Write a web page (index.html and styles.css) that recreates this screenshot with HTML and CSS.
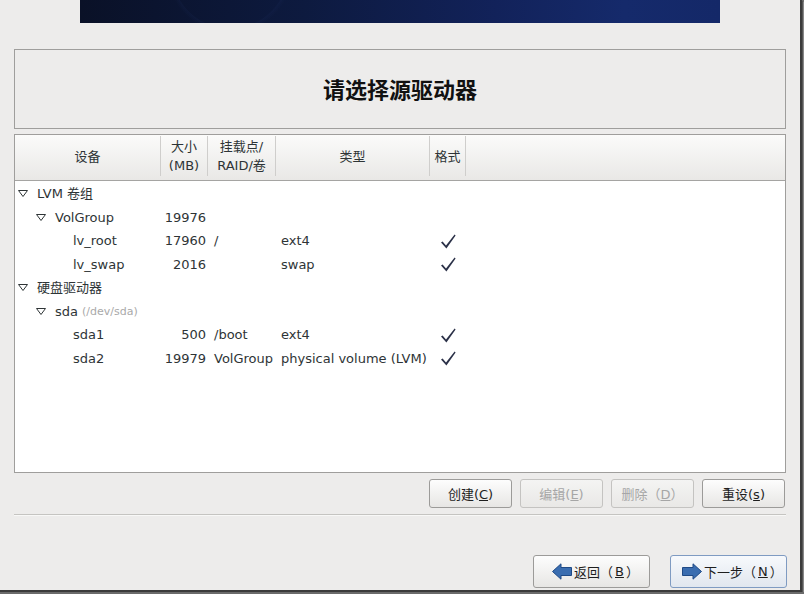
FILE: index.html
```html
<!doctype html>
<html lang="zh-CN">
<head>
  <meta charset="utf-8" />
  <title>请选择源驱动器</title>
  <link rel="stylesheet" href="styles.css">
</head>
<body>
  <div class="window">
    <div class="banner"></div>

    <div class="content">
      <div class="title-box">
        <h1>请选择源驱动器</h1>
      </div>

      <div class="tree">
        <div class="tree-head">
          <div class="th">设备</div>
          <div class="th">大小<br>(MB)</div>
          <div class="th">挂载点/<br>RAID/卷</div>
          <div class="th">类型</div>
          <div class="th">格式</div>
          <div class="th th-fill"></div>
        </div>

        <div class="row">
          <div class="name lvl0"><svg class="expander" viewBox="0 0 10 7"><polygon points="0.5,0.5 9.5,0.5 5,6.5" /></svg>LVM 卷组</div>
          <div class="size"></div><div class="mount"></div><div class="type"></div><div class="fmt"></div><div></div>
        </div>
        <div class="row">
          <div class="name lvl1"><svg class="expander" viewBox="0 0 10 7"><polygon points="0.5,0.5 9.5,0.5 5,6.5" /></svg>VolGroup</div>
          <div class="size">19976</div><div class="mount"></div><div class="type"></div><div class="fmt"></div><div></div>
        </div>
        <div class="row">
          <div class="name leaf">lv_root</div>
          <div class="size">17960</div><div class="mount">/</div><div class="type">ext4</div>
          <div class="fmt"><svg class="check" viewBox="0 0 16 16"><path d="M1 9.5 L2.6 8.6 L6 12.6 L14.6 1.6 L15.6 2.4 L6.4 15.4 Z" /></svg></div><div></div>
        </div>
        <div class="row">
          <div class="name leaf">lv_swap</div>
          <div class="size">2016</div><div class="mount"></div><div class="type">swap</div>
          <div class="fmt"><svg class="check" viewBox="0 0 16 16"><path d="M1 9.5 L2.6 8.6 L6 12.6 L14.6 1.6 L15.6 2.4 L6.4 15.4 Z" /></svg></div><div></div>
        </div>
        <div class="row">
          <div class="name lvl0"><svg class="expander" viewBox="0 0 10 7"><polygon points="0.5,0.5 9.5,0.5 5,6.5" /></svg>硬盘驱动器</div>
          <div class="size"></div><div class="mount"></div><div class="type"></div><div class="fmt"></div><div></div>
        </div>
        <div class="row">
          <div class="name lvl1"><svg class="expander" viewBox="0 0 10 7"><polygon points="0.5,0.5 9.5,0.5 5,6.5" /></svg>sda <span class="dev">(/dev/sda)</span></div>
          <div class="size"></div><div class="mount"></div><div class="type"></div><div class="fmt"></div><div></div>
        </div>
        <div class="row">
          <div class="name leaf">sda1</div>
          <div class="size">500</div><div class="mount">/boot</div><div class="type">ext4</div>
          <div class="fmt"><svg class="check" viewBox="0 0 16 16"><path d="M1 9.5 L2.6 8.6 L6 12.6 L14.6 1.6 L15.6 2.4 L6.4 15.4 Z" /></svg></div><div></div>
        </div>
        <div class="row">
          <div class="name leaf">sda2</div>
          <div class="size">19979</div><div class="mount">VolGroup</div><div class="type">physical volume (LVM)</div>
          <div class="fmt"><svg class="check" viewBox="0 0 16 16"><path d="M1 9.5 L2.6 8.6 L6 12.6 L14.6 1.6 L15.6 2.4 L6.4 15.4 Z" /></svg></div><div></div>
        </div>
      </div>

      <div class="actions">
        <button class="btn">创建(<u>C</u>)</button>
        <button class="btn" disabled>编辑(<u>E</u>)</button>
        <button class="btn" disabled>删除（<u>D</u>）</button>
        <button class="btn">重设(<u>s</u>)</button>
      </div>

      <div class="separator"></div>

      <div class="nav">
        <button class="btn nav-btn">
          <svg class="arrow" viewBox="0 0 20 17"><path d="M0.5 8.5 L9 0.8 L9 4.5 L19.5 4.5 L19.5 12.5 L9 12.5 L9 16.2 Z" /></svg>返回（<u>B</u>）
        </button>
        <button class="btn nav-btn default">
          <svg class="arrow" viewBox="0 0 20 17"><path d="M19.5 8.5 L11 0.8 L11 4.5 L0.5 4.5 L0.5 12.5 L11 12.5 L11 16.2 Z" /></svg>下一步（<u>N</u>）
        </button>
      </div>
    </div>
  </div>
</body>
</html>
```

FILE: styles.css
```css
:root{
  --bg:#edeceb;
  --border:#9f9e9c;
  --text:#2e3436;
}

/* ───────────── 窗口 ───────────── */
body{
  margin:0;
  background:#6b6b6b;
  font-family:"DejaVu Sans","Noto Sans CJK SC",sans-serif;
  font-size:13px;
  color:var(--text);
}
.window{
  width:800px;
  height:590px;
  background:var(--bg);
  border-right:2px solid #3b3b3b;
  border-bottom:2px solid #3b3b3b;
  box-shadow:1px 1px 0 #555, 2px 2px 1px #888;
}
.banner{
  width:640px;
  height:23px;
  margin:0 auto;
  background:
    radial-gradient(circle at 150px -30px, transparent 58px, rgba(40,60,120,.1) 59px, transparent 63px),
    linear-gradient(90deg, #0a1127 0%, #0d1a3f 35%, #12225a 65%, #152a6b 85%, #142868 100%);
}
.content{
  padding:0 14px;
}

/* ───────────── 标题 ───────────── */
.title-box{
  height:80px;
  margin-top:26px;
  padding-bottom:3px;
  box-sizing:border-box;
  border:1px solid var(--border);
  display:flex;
  align-items:center;
  justify-content:center;
}
.title-box h1{
  margin:0;
  font-family:"Noto Sans CJK SC",sans-serif;
  font-size:22px;
  font-weight:bold;
  color:#111;
}

/* ───────────── 树形列表 ───────────── */
.tree{
  height:339px;
  margin-top:5px;
  box-sizing:border-box;
  border:1px solid var(--border);
  background:#fff;
}
.tree-head,
.row{
  display:grid;
  grid-template-columns:146px 47px 68px 154px 36px 1fr;
}
.tree-head{
  height:46px;
  border-bottom:1px solid #a5a4a2;
  background:linear-gradient(#fbfbfa, #e9e8e6);
  box-sizing:border-box;
}
.th{
  display:flex;
  align-items:center;
  justify-content:center;
  text-align:center;
  line-height:19px;
  border-right:1px solid #cfcecc;
  margin:1px 0 4px;
}
.th-fill{ border-right:none; }

.row{
  height:23.5px;
  line-height:23.5px;
  white-space:nowrap;
}
.tree-head + .row{ margin-top:1px; }
.name{
  display:flex;
  align-items:center;
}
.lvl0{ padding-left:3px; }
.lvl1{ padding-left:21px; }
.leaf{ padding-left:58px; }
.expander{
  width:10px;
  height:7px;
  margin-right:9px;
  fill:#fff;
  stroke:#2e3436;
  stroke-width:1;
}
.dev{
  margin-left:4px;
  font-size:11px;
  color:#a9a9a9;
}
.size{
  text-align:right;
  padding-right:2px;
}
.mount{ padding-left:6px; }
.type{ padding-left:5px; }
.fmt{
  display:flex;
  align-items:center;
  justify-content:center;
}
.check{
  width:16px;
  height:16px;
  fill:#2b3148;
}

/* ───────────── 按钮 ───────────── */
.actions{
  display:flex;
  justify-content:flex-end;
  gap:8px;
  margin-top:6px;
  margin-right:1px;
}
.btn{
  width:83px;
  height:29px;
  padding:0;
  border:1px solid #9c9b99;
  border-radius:3px;
  background:linear-gradient(#fdfdfd, #e7e6e4);
  font-family:"DejaVu Sans","Noto Sans CJK SC",sans-serif;
  font-size:13px;
  color:#1e1e1e;
}
.btn:disabled{
  color:#a6a6a6;
  border-color:#c4c3c1;
  background:linear-gradient(#f4f4f3, #e9e8e6);
}
.separator{
  margin-top:6px;
  border-top:1px solid #c5c4c1;
  border-bottom:1px solid #f8f8f7;
}
.nav{
  display:flex;
  justify-content:flex-end;
  gap:20px;
  margin-top:39px;
  margin-right:-1px;
}
.nav-btn{
  width:117px;
  height:33px;
  display:flex;
  align-items:center;
  justify-content:flex-start;
  gap:2px;
  padding-left:18px;
}
.nav-btn.default{
  padding-left:11px;
  border-color:#7f9bc2;
  background:linear-gradient(#f7f9fc, #e1e7ef);
}
.arrow{
  width:20px;
  height:17px;
  fill:#3a6db0;
  stroke:#1f4a86;
  stroke-width:1;
  stroke-linejoin:round;
}
```
